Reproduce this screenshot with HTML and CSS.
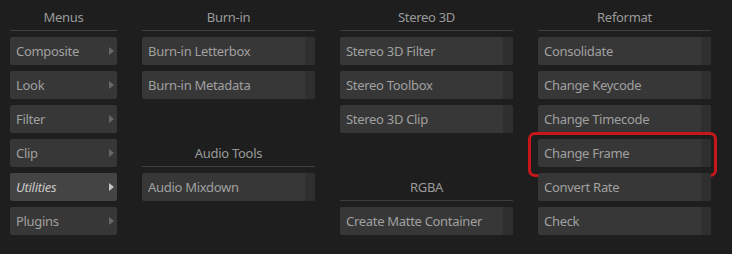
FILE: index.html
```html
<!DOCTYPE html>
<html>
<head>
<meta charset="utf-8">
<link rel="stylesheet" href="styles.css">
</head>
<body>
<div class="panel">
  <div class="col col-menu">
    <div class="hdr">Menus</div>
    <div class="btn menu">Composite<span class="arrow"></span></div>
    <div class="btn menu">Look<span class="arrow"></span></div>
    <div class="btn menu">Filter<span class="arrow"></span></div>
    <div class="btn menu">Clip<span class="arrow"></span></div>
    <div class="btn menu active">Utilities<span class="arrow"></span></div>
    <div class="btn menu">Plugins<span class="arrow"></span></div>
  </div>
  <div class="col">
    <div class="hdr">Burn-in</div>
    <div class="btn tool"><span class="lbl">Burn-in Letterbox</span><span class="side"></span></div>
    <div class="btn tool"><span class="lbl">Burn-in Metadata</span><span class="side"></span></div>
    <div class="spacer"></div>
    <div class="hdr">Audio Tools</div>
    <div class="btn tool"><span class="lbl">Audio Mixdown</span><span class="side"></span></div>
  </div>
  <div class="col">
    <div class="hdr">Stereo 3D</div>
    <div class="btn tool"><span class="lbl">Stereo 3D Filter</span><span class="side"></span></div>
    <div class="btn tool"><span class="lbl">Stereo Toolbox</span><span class="side"></span></div>
    <div class="btn tool"><span class="lbl">Stereo 3D Clip</span><span class="side"></span></div>
    <div class="spacer"></div>
    <div class="hdr">RGBA</div>
    <div class="btn tool"><span class="lbl">Create Matte Container</span><span class="side"></span></div>
  </div>
  <div class="col">
    <div class="hdr">Reformat</div>
    <div class="btn tool"><span class="lbl">Consolidate</span><span class="side"></span></div>
    <div class="btn tool"><span class="lbl">Change Keycode</span><span class="side"></span></div>
    <div class="btn tool"><span class="lbl">Change Timecode</span><span class="side"></span></div>
    <div class="btn tool highlighted"><span class="lbl">Change Frame</span><span class="side"></span><span class="ring"></span></div>
    <div class="btn tool"><span class="lbl">Convert Rate</span><span class="side"></span></div>
    <div class="btn tool"><span class="lbl">Check</span><span class="side"></span></div>
  </div>
</div>
</body>
</html>
```
FILE: styles.css
```css
html, body {
  margin: 0;
  padding: 0;
  background: #1e1e1e;
  width: 732px;
  height: 254px;
  overflow: hidden;
}
body {
  font-family: "Noto Sans", "Open Sans", sans-serif;
  font-size: 13px;
  letter-spacing: -0.3px;
  color: #a0a0a0;
}
.panel {
  display: flex;
  gap: 25px;
  padding: 3px 0 0 10px;
}
.col {
  display: flex;
  flex-direction: column;
  gap: 6px;
  width: 173px;
}
.col-menu {
  width: 107px;
}
.hdr {
  height: 28px;
  box-sizing: border-box;
  border-bottom: 1px solid #3e3e3e;
  display: flex;
  align-items: center;
  justify-content: center;
  color: #9a9a9a;
  padding-top: 1px;
}
.spacer {
  height: 28px;
}
.btn {
  position: relative;
  height: 28px;
  box-sizing: border-box;
  background: #373737;
  border-radius: 2px;
  display: flex;
  align-items: center;
  white-space: nowrap;
}
.menu {
  padding-left: 6px;
  justify-content: space-between;
  padding-right: 3px;
}
.arrow {
  width: 0;
  height: 0;
  border-left: 5px solid #676767;
  border-top: 4.5px solid transparent;
  border-bottom: 4.5px solid transparent;
}
.menu.active {
  background: #444444;
  color: #c9c9c9;
  font-style: italic;
}
.menu.active .arrow {
  border-left-color: #c4c4c4;
}
.tool .lbl {
  flex: 1;
  padding-left: 6px;
  height: 100%;
  display: flex;
  align-items: center;
}
.tool .side {
  width: 10px;
  height: 100%;
  background: #2f2f2f;
  border-radius: 0 2px 2px 0;
}
.ring {
  position: absolute;
  left: -10px;
  top: -7px;
  width: 189px;
  height: 45px;
  box-sizing: border-box;
  border: 3px solid #c8171b;
  border-radius: 7px;
  pointer-events: none;
}
```
